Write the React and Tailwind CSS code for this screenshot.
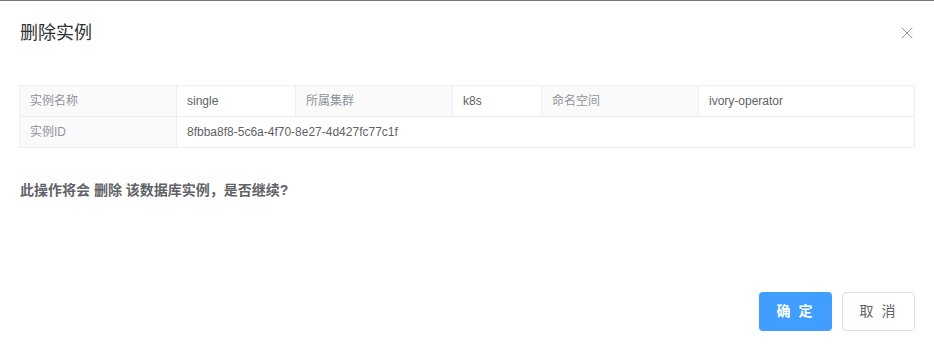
import React from "react";
import { X } from "lucide-react";

const font = { fontFamily: '"Liberation Sans", "Noto Sans CJK SC", sans-serif' };

function Label({ children, className = "" }) {
  return (
    <div className={`flex items-center px-[10px] bg-[#fafafa] text-[#909399] border-r border-b border-[#ebeef5] ${className}`}>
      {children}
    </div>
  );
}

function Value({ children, className = "" }) {
  return (
    <div className={`flex items-center px-[10px] text-[#606266] border-r border-b border-[#ebeef5] ${className}`}>
      {children}
    </div>
  );
}

export default function App() {
  return (
    <div className="h-[350px] w-full bg-white border-t border-[#777] flex flex-col" style={font}>
      {/* Header */}
      <div className="flex items-center justify-between px-5 pt-5 pb-[10px]">
        <h2 className="text-[18px] leading-6 text-[#303133]">删除实例</h2>
        <button className="text-[#909399] -mr-[3px] -mt-[1px]">
          <X size={20} strokeWidth={1.2} />
        </button>
      </div>

      {/* Body */}
      <div className="px-[19px] pt-[30px]">
        <div className="grid grid-cols-[157px_119px_157px_89px_157px_1fr] auto-rows-[31px] border-t border-l border-[#ebeef5] text-[12px]">
          <Label>实例名称</Label>
          <Value>single</Value>
          <Label>所属集群</Label>
          <Value>k8s</Value>
          <Label>命名空间</Label>
          <Value>ivory-operator</Value>
          <Label>实例ID</Label>
          <Value className="col-span-5">8fbba8f8-5c6a-4f70-8e27-4d427fc77c1f</Value>
        </div>
        <p className="mt-[32px] px-px text-[14px] leading-5 font-bold text-[#606266]">
          此操作将会 删除 该数据库实例，是否继续?
        </p>
      </div>

      {/* Footer */}
      <div className="mt-auto flex justify-end gap-[10px] px-[19px] pb-[19px]">
        <button className="w-[73px] h-[39px] rounded-[4px] bg-[#409eff] text-white text-[14px] font-bold tracking-[2px]">
          确 定
        </button>
        <button className="w-[73px] h-[39px] rounded-[4px] border border-[#dcdfe6] bg-white text-[#606266] text-[14px] tracking-[2px]">
          取 消
        </button>
      </div>
    </div>
  );
}
